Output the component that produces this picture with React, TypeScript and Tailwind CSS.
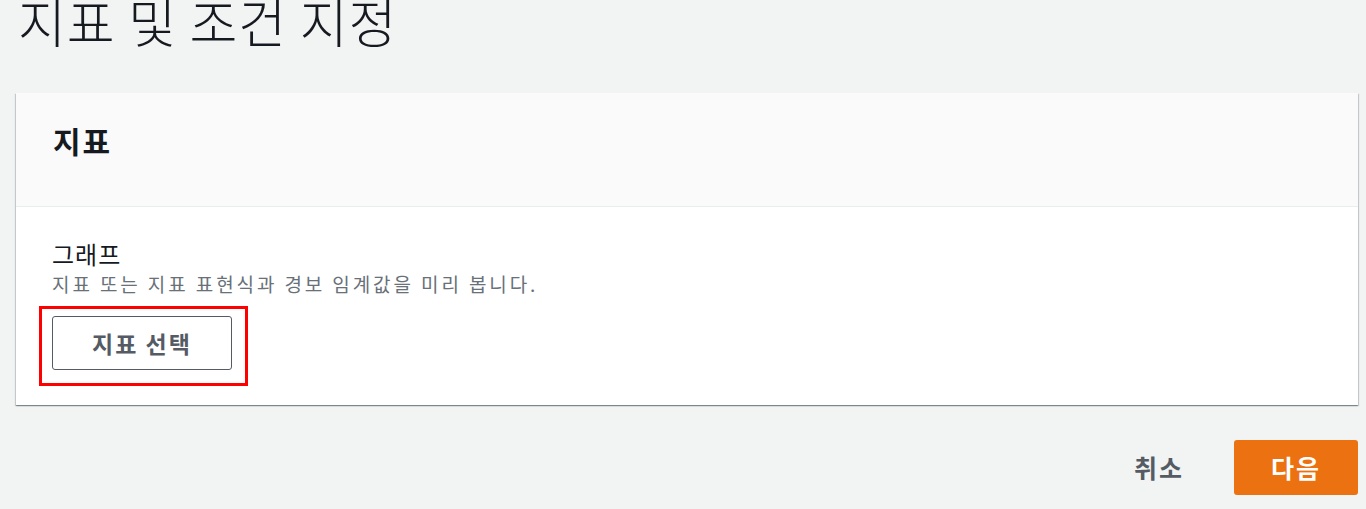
const font = { fontFamily: '"Noto Sans CJK KR", "Noto Sans", sans-serif' };

export default function App() {
  return (
    <div className="min-h-[509px] bg-[#f2f3f3] pl-4 pr-2 overflow-hidden" style={font}>
      <h1 className="-mt-[9px] pl-[2px] text-[52px] font-light leading-[60px] text-[#16191f] tracking-[1px]">
        지표 및 조건 지정
      </h1>

      <section className="mt-[42px] bg-white shadow-[0_1px_1px_0_rgba(0,28,36,0.3),1px_1px_1px_0_rgba(0,28,36,0.15),-1px_1px_1px_0_rgba(0,28,36,0.15)]">
        <div className="h-[114px] px-[37px] pt-[32px] bg-[#fafafa] border-b border-[#eaeded]">
          <h2 className="text-[30px] font-bold text-[#16191f] leading-[30px] tracking-[2px]">지표</h2>
        </div>
        <div className="px-[36px] pt-[31px] pb-[19px]">
          <div className="text-[24px] leading-[32px] text-[#16191f] tracking-[1px]">그래프</div>
          <p className="text-[19px] leading-[28px] text-[#687078] tracking-[2.9px]">
            지표 또는 지표 표현식과 경보 임계값을 미리 봅니다.
          </p>
          <div className="mt-[8px] -ml-[13px] w-[209px] border-[3px] border-[#ff0000] pl-[10px] pt-[7px] pb-[13px]">
            <button className="w-[180px] h-[54px] rounded-[3px] border border-[#545b64] bg-white text-[23px] font-bold text-[#545b64] tracking-[2px]">
              지표 선택
            </button>
          </div>
        </div>
      </section>

      <div className="flex justify-end items-center gap-[50px] mt-[35px]">
        <button className="text-[25px] font-bold text-[#545b64] tracking-[2px]">취소</button>
        <button className="w-[124px] h-[55px] rounded-[3px] bg-[#ec7211] text-[25px] font-bold text-white tracking-[2px]">다음</button>
      </div>
    </div>
  );
}
